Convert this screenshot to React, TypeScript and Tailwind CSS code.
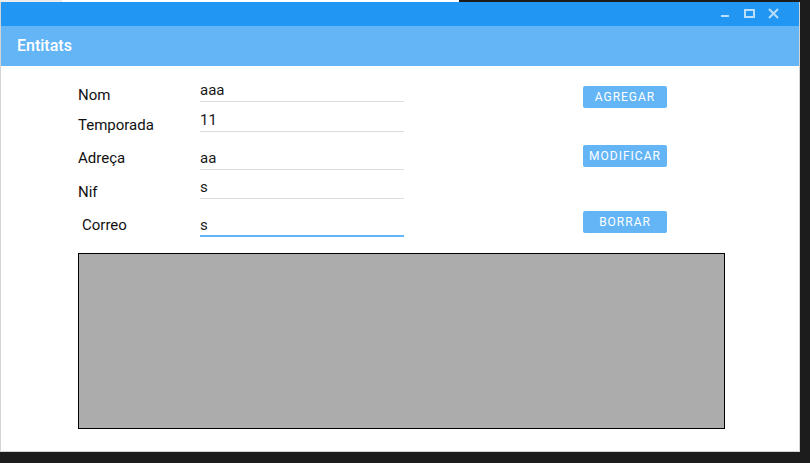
import React from "react";

const font = { fontFamily: "Roboto, 'Noto Sans', sans-serif" };

function Row({ label, value, mt, labelMt, labelPl = 0, active = false }: { label: string; value: string; mt: string; labelMt: string; labelPl?: number; active?: boolean }) {
  return (
    <div className={`flex h-[22px] ${mt}`}>
      <div className={`w-[122px] text-[15px] leading-[20px] text-[#111] ${labelMt}`} style={labelPl ? { paddingLeft: labelPl } : undefined}>
        {label}
      </div>
      <div
        className={`w-[204px] h-[22px] text-[15px] leading-[20px] text-[#1a1a1a] ${active ? "border-b-2 border-[#64b5f6]" : "border-b border-[#dcdcdc]"}`}
      >
        {value}
      </div>
    </div>
  );
}

function Btn({ children, mt }: { children: React.ReactNode; mt: string }) {
  return (
    <div className={`w-[84px] h-[22px] ${mt} bg-[#64b5f6] rounded-[2px] flex items-center justify-center text-white text-[12px] tracking-[1px] font-normal`}>
      {children}
    </div>
  );
}

export default function App() {
  return (
    <div className="w-[810px] h-[463px] bg-[#1c1c1c] overflow-hidden" style={font}>
      <div className="flex h-[2px]">
        <div className="w-[62px] bg-[#ededed]" />
        <div className="w-[397px] bg-white" />
      </div>
      <div className="w-[800px] h-[450px] bg-white border-l border-r border-b border-[#d4d4d4] flex flex-col">
        <div className="h-[24px] bg-[#2196f3] flex items-center justify-end shrink-0">
          <svg width="70" height="24" viewBox="0 0 70 24" className="mr-[14px]">
            <g fill="none" stroke="#bbdefb" strokeWidth="2">
              <line x1="6" y1="14" x2="14" y2="14" />
              <rect x="30" y="8" width="9" height="7" />
              <line x1="54" y1="7" x2="63" y2="16" />
              <line x1="63" y1="7" x2="54" y2="16" />
            </g>
          </svg>
        </div>
        <div className="h-[40px] bg-[#64b5f6] flex items-center pl-[16px] shrink-0">
          <span className="text-white text-[16px] font-medium">Entitats</span>
        </div>
        <div className="flex-1 pl-[77px]">
          <div className="flex">
            <div className="flex flex-col w-[326px] pt-[14px]">
              <Row label="Nom" value="aaa" mt="mt-0" labelMt="mt-[5px]" />
              <Row label="Temporada" value="11" mt="mt-[8px]" labelMt="mt-[5px]" />
              <Row label="Adreça" value="aa" mt="mt-[16px]" labelMt="mt-0" />
              <Row label="Nif" value="s" mt="mt-[7px]" labelMt="mt-[5px]" />
              <Row label="Correo" value="s" mt="mt-[16px]" labelMt="mt-0" labelPl={4} active />
            </div>
            <div className="flex flex-col ml-[179px] pt-[20px]">
              <Btn mt="mt-0">AGREGAR</Btn>
              <Btn mt="mt-[37px]">MODIFICAR</Btn>
              <Btn mt="mt-[44px]">BORRAR</Btn>
            </div>
          </div>
          <div className="mt-[16px] w-[647px] h-[176px] bg-[#acacac] border border-black" />
        </div>
      </div>
    </div>
  );
}
